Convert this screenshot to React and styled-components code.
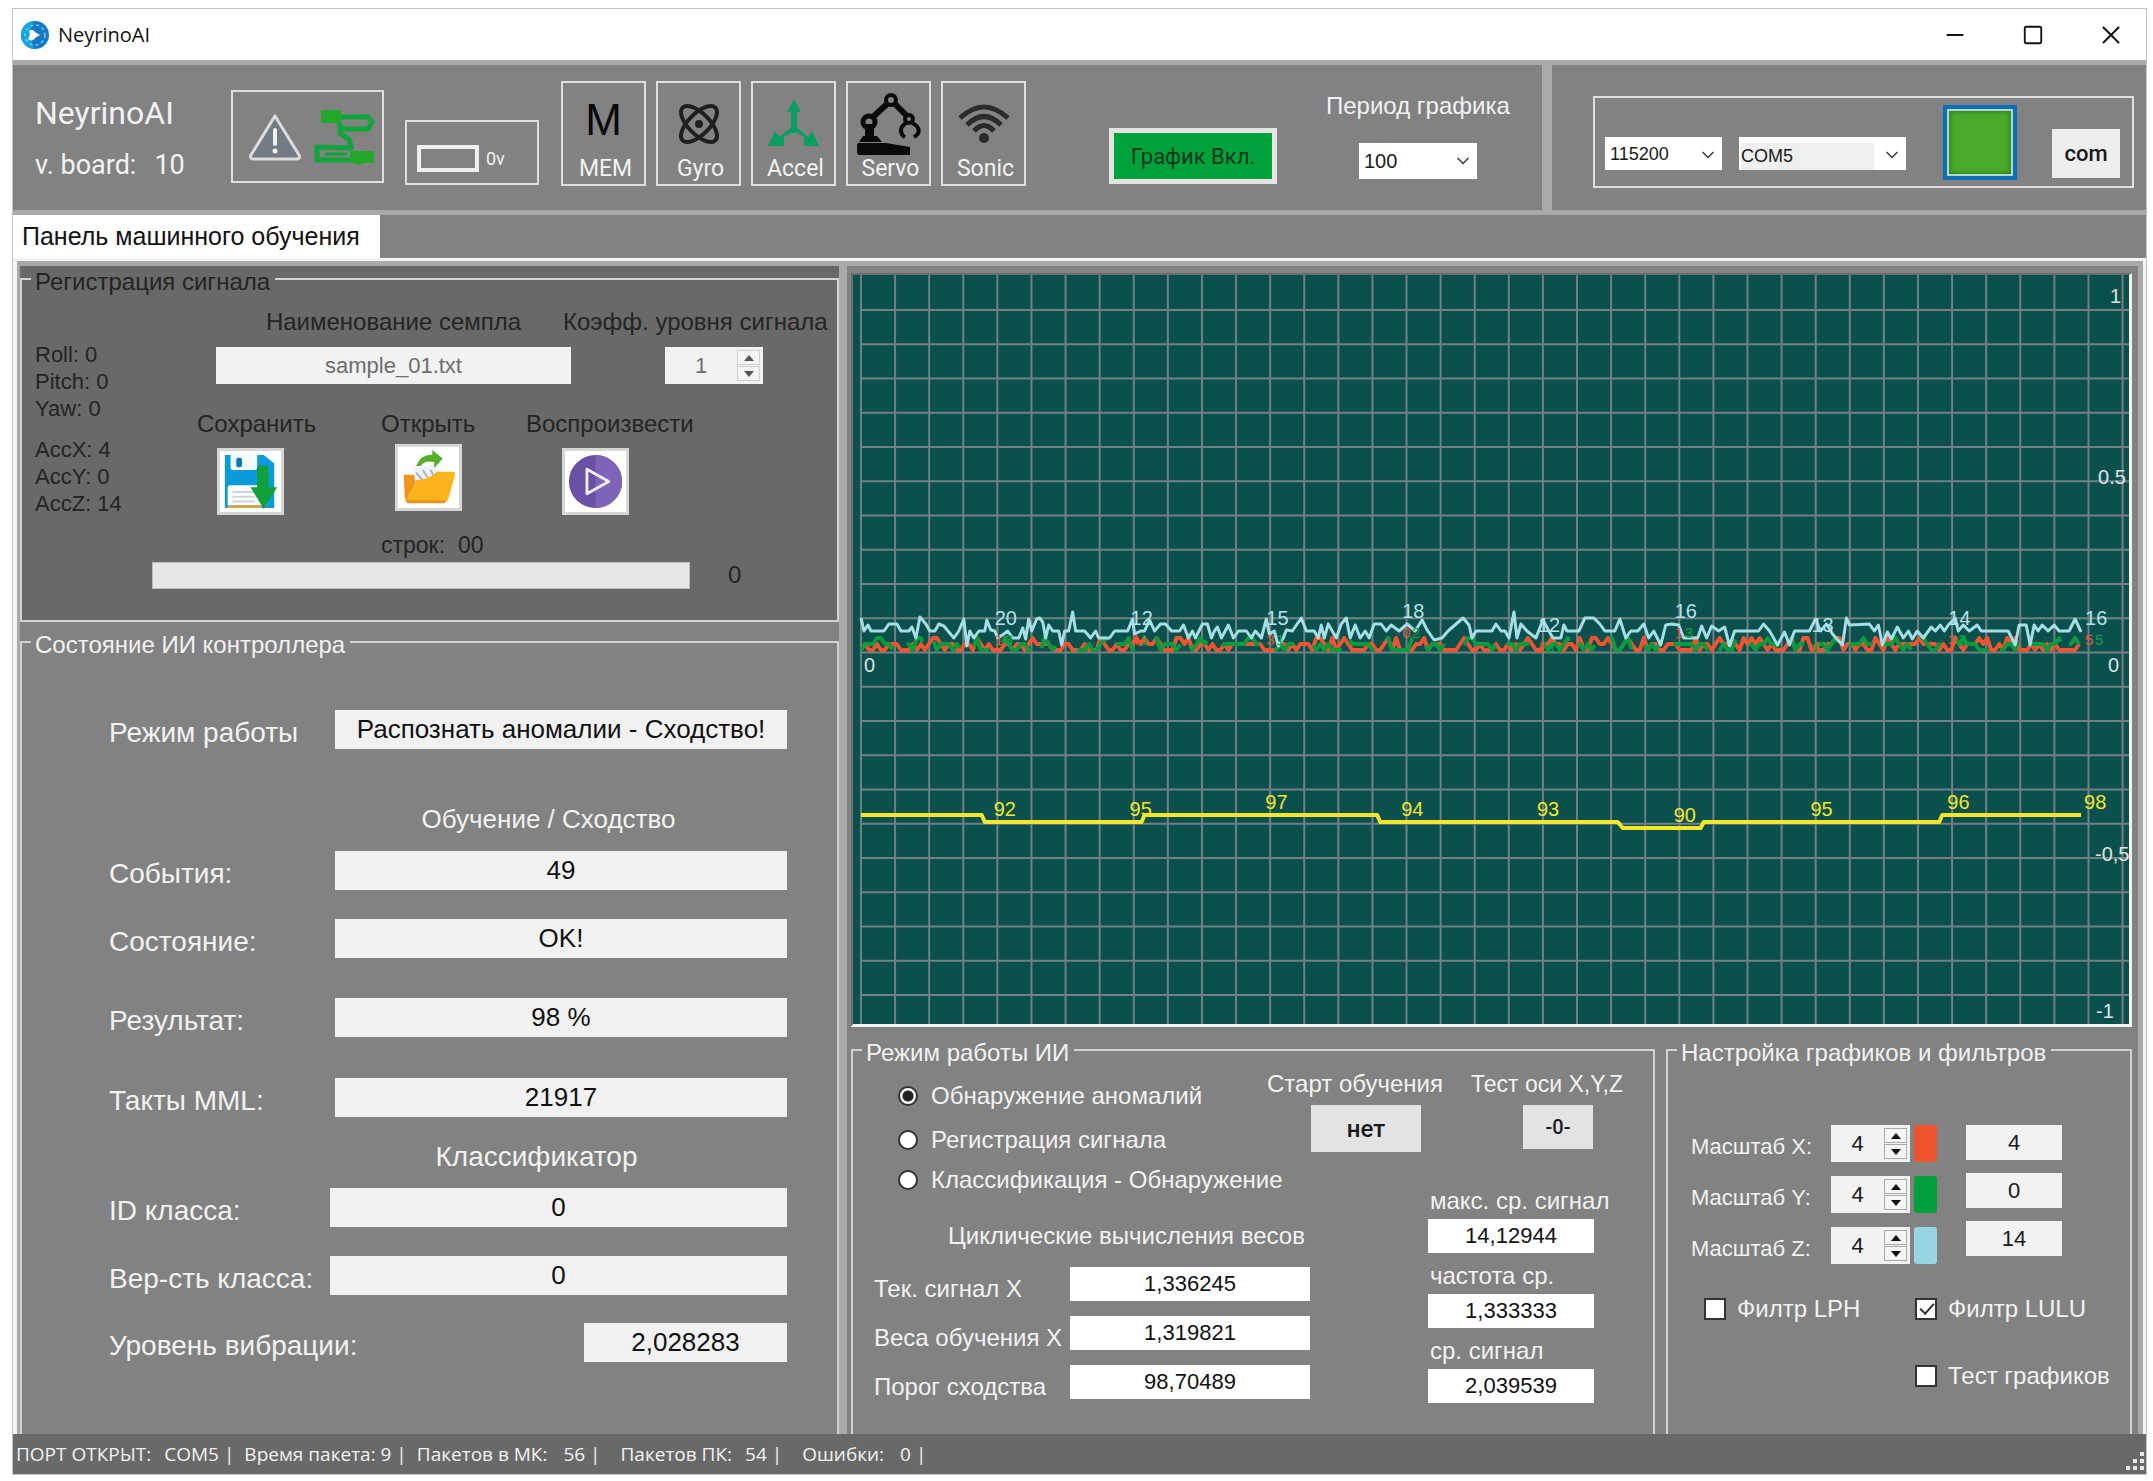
import styled, { createGlobalStyle } from "styled-components"
import { Atom, ChevronDown, Minus, Square, X } from "lucide-react"

const axes = [
    { name: "X", scale: 4, color: "#f0532f", value: 4 },
    { name: "Y", scale: 4, color: "#00a03c", value: 0 },
    { name: "Z", scale: 4, color: "#97d6e0", value: 14 },
]

export default function App() {
    return (
        <>
            <GlobalStyle />
            <Window>
                <TitleBar />
                <Toolbar />
                <Tabs>
                    <Tab type="button">Панель машинного обучения</Tab>
                </Tabs>
                <Body>
                    <LeftColumn>
                        <SignalPanel />
                        <StatePanel />
                    </LeftColumn>
                    <RightColumn>
                        <ChartFrame>
                            <Chart />
                        </ChartFrame>
                        <Settings>
                            <ModePanel />
                            <FilterPanel />
                        </Settings>
                    </RightColumn>
                </Body>
                <StatusBar>
                    <span>ПОРТ ОТКРЫТ:</span>
                    <StatusValue $gap={13}>COM5 |</StatusValue>
                    <StatusValue $gap={10}>Время пакета: 9 |</StatusValue>
                    <StatusValue $gap={10}>Пакетов в МК:</StatusValue>
                    <StatusValue $gap={16}>56 |</StatusValue>
                    <StatusValue $gap={20}>Пакетов ПК:</StatusValue>
                    <StatusValue $gap={13}>54 |</StatusValue>
                    <StatusValue $gap={20}>Ошибки:</StatusValue>
                    <StatusValue $gap={16}>0 |</StatusValue>
                    <GripIcon />
                </StatusBar>
            </Window>
        </>
    )
}

function TitleBar() {
    return (
        <TitleContainer>
            <LogoIcon />
            <h1>NeyrinoAI</h1>
            <WindowButton type="button" aria-label="Свернуть"><Minus size={26} strokeWidth={2} /></WindowButton>
            <WindowButton type="button" aria-label="Развернуть"><Square size={22} strokeWidth={2} /></WindowButton>
            <WindowButton type="button" aria-label="Закрыть"><X size={30} strokeWidth={1.6} /></WindowButton>
        </TitleContainer>
    )
}

function Toolbar() {
    return (
        <ToolbarContainer>
            <ToolbarMain>
                <Board>
                    <h2>NeyrinoAI</h2>
                    <p><span>v. board:</span><span>10</span></p>
                </Board>
                <LinkBox>
                    <WarningIcon />
                    <CableIcon />
                </LinkBox>
                <BatteryBox>
                    <Battery />
                    0v
                </BatteryBox>
                <Sensors>
                    <SensorButton type="button"><BigLetter>M</BigLetter><span>MEM</span></SensorButton>
                    <SensorButton type="button"><Atom size={48} color="#1f1f1f" strokeWidth={2} /><span>Gyro</span></SensorButton>
                    <SensorButton type="button"><AccelIcon /><span>Accel</span></SensorButton>
                    <SensorButton type="button"><ServoIcon /><span>Servo</span></SensorButton>
                    <SensorButton type="button"><SonicIcon /><span>Sonic</span></SensorButton>
                </Sensors>
                <GraphButton type="button">График Вкл.</GraphButton>
                <Period>
                    <label htmlFor="period">Период графика</label>
                    <Select id="period" value="100" width={118} height={36} size={20} />
                </Period>
            </ToolbarMain>
            <PortArea>
                <PortBox>
                    <Select label="Скорость" value="115200" width={117} height={33} size={18} />
                    <Select label="Порт" value="COM5" width={167} height={33} size={18} shaded />
                    <PortLamp type="button" aria-label="Порт открыт" />
                    <ComButton type="button">com</ComButton>
                </PortBox>
            </PortArea>
        </ToolbarContainer>
    )
}

function Select({ id, label, value, width, height, size, shaded }) {
    return (
        <SelectBox $width={width} $height={height} $size={size} $shaded={shaded}>
            <select id={id} aria-label={label} defaultValue={value}>
                <option>{value}</option>
            </select>
            <ChevronDown size={20} color="#444" strokeWidth={2} />
        </SelectBox>
    )
}

function Spinner({ id, value, label, width, muted }) {
    return (
        <SpinnerBox $width={width} $muted={muted}>
            <input id={id} defaultValue={value} inputMode="numeric" aria-label={label} />
            <div>
                <button type="button" aria-label="Больше"><svg viewBox="0 0 10 6"><path d="M5 0 10 6H0z" /></svg></button>
                <button type="button" aria-label="Меньше"><svg viewBox="0 0 10 6"><path d="M0 0h10L5 6z" /></svg></button>
            </div>
        </SpinnerBox>
    )
}

function SignalPanel() {
    return (
        <SignalGroup>
            <legend>Регистрация сигнала</legend>
            <SignalContent>
                <Readings>
                    <p>Roll: 0</p>
                    <p>Pitch: 0</p>
                    <p>Yaw: 0</p>
                    <p>AccX: 4</p>
                    <p>AccY: 0</p>
                    <p>AccZ: 14</p>
                </Readings>
                <SignalMain>
                    <SampleRow>
                        <SampleField>
                            <label htmlFor="sample">Наименование семпла</label>
                            <SampleInput id="sample" defaultValue="sample_01.txt" />
                        </SampleField>
                        <LevelField>
                            <label htmlFor="level">Коэфф. уровня сигнала</label>
                            <Spinner id="level" value="1" width={98} muted />
                        </LevelField>
                    </SampleRow>
                    <FileActions>
                        <FileAction $gap={10} $indent={20}>
                            <label htmlFor="save">Сохранить</label>
                            <FileButton id="save" type="button"><SaveIcon /></FileButton>
                        </FileAction>
                        <FileAction $gap={6} $indent={14}>
                            <label htmlFor="open">Открыть</label>
                            <FileButton id="open" type="button"><OpenIcon /></FileButton>
                        </FileAction>
                        <FileAction $gap={10} $indent={36}>
                            <label htmlFor="play">Воспроизвести</label>
                            <FileButton id="play" type="button"><PlayIcon /></FileButton>
                        </FileAction>
                    </FileActions>
                    <Lines htmlFor="lines"><span>строк:</span><span>00</span></Lines>
                    <ProgressRow>
                        <Progress id="lines" value="0" max="100" />
                        <span>0</span>
                    </ProgressRow>
                </SignalMain>
            </SignalContent>
        </SignalGroup>
    )
}

function StateField({ id, label, value, gap, labelWidth = 226 }) {
    return (
        <StateRow $gap={gap} $labelWidth={labelWidth}>
            <label htmlFor={id}>{label}</label>
            <input id={id} value={value} readOnly />
        </StateRow>
    )
}

function StatePanel() {
    return (
        <StateGroup>
            <legend>Состояние ИИ контроллера</legend>
            <StateContent>
                <StateField id="mode" label="Режим работы" value="Распознать аномалии - Сходство!" gap={55} />
                <StateHeading $gap={54} $size={26} $right={24}>Обучение / Сходство</StateHeading>
                <StateField id="events" label="События:" value="49" gap={16} />
                <StateField id="state" label="Состояние:" value="OK!" gap={29} />
                <StateField id="result" label="Результат:" value="98 %" gap={40} />
                <StateField id="ticks" label="Такты MML:" value="21917" gap={41} />
                <StateHeading $gap={24} $size={28} $right={48}>Классификатор</StateHeading>
                <StateField id="classId" label="ID класса:" value="0" gap={15} labelWidth={221} />
                <StateField id="classProb" label="Вер-сть класса:" value="0" gap={29} labelWidth={221} />
                <StateField id="vibration" label="Уровень вибрации:" value="2,028283" gap={28} labelWidth={475} />
            </StateContent>
        </StateGroup>
    )
}

function ModePanel() {
    return (
        <Group>
            <legend>Режим работы ИИ</legend>
            <ModeTop>
                <Radios>
                    <label><input type="radio" name="aiMode" defaultChecked />Обнаружение аномалий</label>
                    <label><input type="radio" name="aiMode" />Регистрация сигнала</label>
                    <label><input type="radio" name="aiMode" />Классификация - Обнаружение</label>
                </Radios>
                <ModeAction $width={204} $indent={44} $size={24}>
                    <label htmlFor="start">Старт обучения</label>
                    <StartButton id="start" type="button">нет</StartButton>
                </ModeAction>
                <ModeAction $width={154} $indent={52} $size={23}>
                    <label htmlFor="axisTest">Тест оси X,Y,Z</label>
                    <AxisButton id="axisTest" type="button">-0-</AxisButton>
                </ModeAction>
            </ModeTop>
            <ModeBottom>
                <Weights>
                    <h3>Циклические вычисления весов</h3>
                    <WeightRow>
                        <label htmlFor="current">Тек. сигнал X</label>
                        <WhiteInput id="current" defaultValue="1,336245" />
                    </WeightRow>
                    <WeightRow>
                        <label htmlFor="weights">Веса обучения X</label>
                        <WhiteInput id="weights" defaultValue="1,319821" />
                    </WeightRow>
                    <WeightRow>
                        <label htmlFor="threshold">Порог сходства</label>
                        <WhiteInput id="threshold" defaultValue="98,70489" />
                    </WeightRow>
                </Weights>
                <Averages>
                    <label htmlFor="maxAvg">макс. ср. сигнал</label>
                    <WhiteInput id="maxAvg" defaultValue="14,12944" />
                    <label htmlFor="freqAvg">частота ср.</label>
                    <WhiteInput id="freqAvg" defaultValue="1,333333" />
                    <label htmlFor="signalAvg">ср. сигнал</label>
                    <WhiteInput id="signalAvg" defaultValue="2,039539" />
                </Averages>
            </ModeBottom>
        </Group>
    )
}

function FilterPanel() {
    return (
        <Group>
            <legend>Настройка графиков и фильтров</legend>
            <Scales>
                <ScaleRows>
                    {axes.map(axis => (
                        <ScaleRow key={axis.name}>
                            <label htmlFor={"scale" + axis.name}>Масштаб {axis.name}:</label>
                            <Spinner id={"scale" + axis.name} value={axis.scale} width={79} />
                            <Swatch $color={axis.color} />
                        </ScaleRow>
                    ))}
                </ScaleRows>
                <ScaleValues>
                    {axes.map(axis => (
                        <input key={axis.name} value={axis.value} aria-label={"Значение " + axis.name} readOnly />
                    ))}
                </ScaleValues>
            </Scales>
            <Checks>
                <label><input type="checkbox" /><span>Филтр LPH</span></label>
                <label><input type="checkbox" defaultChecked /><span>Филтр LULU</span></label>
                <label><input type="checkbox" /><span>Тест графиков</span></label>
            </Checks>
        </Group>
    )
}

// chart geometry, in viewBox units
const GRID_X = 34.15
const GRID_Y = 34.25
const LEFT = 8
const ZERO = 377

const columns = Array.from({ length: 38 }, (_, i) => LEFT + i * GRID_X)
const rows = Array.from({ length: 21 }, (_, i) => 35 + i * GRID_Y)

// acceleration Z: x, height above zero
const accZ = [
    8, 34, 11, 21, 15, 27, 18, 21, 31, 21, 36, 28, 44, 28, 48, 21, 56, 21, 59, 25, 63, 14, 67, 35, 73, 28, 77, 21, 82, 21,
    86, 28, 91, 26, 101, 14, 106, 21, 111, 33, 114, 6, 117, 21, 121, 14, 126, 21, 132, 21, 134, 32, 138, 22, 142, 21,
    145, 14, 151, 18, 155, 21, 160, 14, 166, 14, 170, 24, 173, 13, 176, 33, 179, 21, 184, 33, 187, 34, 190, 30, 193, 14,
    196, 27, 200, 21, 206, 21, 209, 7, 212, 21, 216, 21, 220, 40, 223, 21, 232, 21, 238, 14, 243, 21, 246, 14, 257, 14,
    262, 21, 269, 21, 275, 21, 280, 33, 282, 18, 288, 21, 292, 21, 297, 32, 302, 21, 308, 28, 313, 28, 319, 21, 327, 21,
    331, 27, 336, 14, 340, 21, 343, 14, 350, 28, 355, 28, 359, 14, 362, 21, 365, 25, 369, 14, 376, 27, 381, 14, 386, 21,
    394, 21, 399, 14, 403, 21, 409, 14, 414, 33, 417, 18, 422, 21, 426, 6, 431, 14, 434, 22, 440, 21, 449, 34, 454, 21,
    462, 21, 466, 14, 469, 27, 472, 14, 476, 28, 480, 21, 484, 14, 489, 28, 494, 34, 498, 14, 503, 27, 508, 14, 513, 21,
    517, 14, 522, 28, 529, 28, 534, 21, 539, 27, 547, 21, 555, 28, 563, 21, 570, 32, 575, 22, 582, 12, 590, 14, 596, 21,
    604, 28, 611, 34, 617, 27, 620, 14, 624, 21, 640, 21, 644, 28, 649, 21, 653, 21, 657, 14, 662, 40, 665, 14, 669, 28,
    675, 21, 684, 14, 691, 32, 697, 21, 701, 14, 709, 14, 712, 27, 715, 21, 727, 21, 733, 34, 742, 34, 748, 28, 753, 21,
    763, 21, 768, 33, 774, 14, 779, 21, 786, 21, 792, 28, 797, 14, 802, 21, 809, 7, 814, 27, 820, 28, 827, 27, 832, 14,
    846, 14, 850, 26, 855, 14, 860, 26, 867, 21, 873, 25, 878, 6, 883, 21, 907, 21, 912, 28, 918, 21, 926, 7, 933, 20,
    938, 7, 943, 21, 958, 21, 964, 33, 969, 21, 975, 28, 981, 18, 991, 7, 995, 34, 998, 27, 1018, 28, 1023, 21, 1027, 27,
    1031, 7, 1036, 20, 1040, 13, 1046, 25, 1052, 14, 1057, 21, 1061, 13, 1066, 21, 1072, 14, 1080, 25, 1084, 21, 1089, 27,
    1093, 21, 1097, 27, 1104, 34, 1107, 21, 1112, 27, 1118, 21, 1126, 27, 1130, 21, 1157, 21, 1164, 7, 1168, 27, 1175, 27,
    1179, 7, 1183, 27, 1187, 21, 1191, 27, 1197, 21, 1203, 27, 1208, 21, 1218, 21, 1224, 33, 1230, 20,
]

const accZPoints = accZ.reduce((out, n, i) => out + (i % 2 ? `,${ZERO - n} ` : n), "")

// low level noise of the X and Y axes, stepped in units of one count
function noise(seed, chance) {
    let state = seed
    const points = []
    for (let x = LEFT; x <= 1230; x += 4) {
        state = (state * 16807) % 2147483647
        const r = state / 2147483647
        const level = r < chance ? 0 : r < 0.86 ? 1 : 2
        points.push(`${x},${ZERO - 2 - level * 6}`)
    }
    return points.join(" ")
}

const accXPoints = noise(4217, 0.45)
const accYPoints = noise(991, 0.35)

const peaks = [
    { x: 142, z: "20", zy: 350, p: "92", py: 541, a: "1", b: "3" },
    { x: 278, z: "12", zy: 350, p: "95", py: 541, a: "4", b: "1" },
    { x: 414, z: "15", zy: 350, p: "97", py: 534, a: "3", b: "1" },
    { x: 550, z: "18", zy: 343, p: "94", py: 541, a: "0", b: "2" },
    { x: 686, z: "12", zy: 357, p: "93", py: 541, a: "1", b: "1" },
    { x: 823, z: "16", zy: 343, p: "90", py: 547, a: "1", b: "3" },
    { x: 960, z: "13", zy: 357, p: "95", py: 541, a: "4", b: "1" },
    { x: 1097, z: "14", zy: 350, p: "96", py: 534, a: "3", b: "3" },
    { x: 1234, z: "16", zy: 350, p: "98", py: 534, a: "5", b: "5" },
]

function Chart() {
    return (
        <ChartSvg viewBox="0 0 1278 749" preserveAspectRatio="none" role="img">
            <g stroke="#737f82" strokeWidth="2">
                {columns.map(x => <line key={x} x1={x} x2={x} y1="0" y2="749" />)}
                {rows.map(y => <line key={y} x1={LEFT} x2="1278" y1={y} y2={y} />)}
            </g>
            <g fill="none" strokeLinejoin="round">
                <polyline points={accXPoints} stroke="#f0532f" strokeWidth="4" />
                <polyline points={accYPoints} stroke="#0a9b3f" strokeWidth="4" strokeDasharray="44 18 30 26" />
                <polyline points={accZPoints} stroke="#a6dde6" strokeWidth="3" />
                <polyline
                    points="8,540 129,540 132,547 289,547 292,540 525,540 528,547 766,547 771,553 849,553 852,547 1088,547 1091,540 1230,540"
                    stroke="#f4e62a"
                    strokeWidth="4"
                />
            </g>
            {peaks.map(peak => (
                <g key={peak.x}>
                    <text x={peak.x} y={peak.zy} fill="#b4e2ee">{peak.z}</text>
                    <text x={peak.x} y={peak.zy + 20} fontSize="15" fill="#f0532f">{peak.a}</text>
                    <text x={peak.x + 10} y={peak.zy + 20} fontSize="15" fill="#0fa544">{peak.b}</text>
                    <text x={peak.x - 1} y={peak.py} fill="#f4e62a">{peak.p}</text>
                </g>
            ))}
            <g fill="#dfe3e3">
                <text x="11" y="397">0</text>
                <text x="1259" y="28">1</text>
                <text x="1247" y="209">0.5</text>
                <text x="1257" y="397">0</text>
                <text x="1244" y="586">-0,5</text>
                <text x="1245" y="743">-1</text>
            </g>
        </ChartSvg>
    )
}

function LogoIcon() {
    return (
        <svg width="28" height="28" viewBox="0 0 28 28">
            <circle cx="14" cy="14" r="14" fill="#1479c4" />
            <path d="M14 0A14 14 0 0 0 14 28C9 24 8 5 14 0z" fill="#14a5e0" />
            <circle cx="14" cy="14" r="10" fill="none" stroke="#7cc6ef" strokeWidth="1.5" strokeDasharray="3 3" />
            <path d="M8 10c3-2 5-1 6 1l5 3-5 3c-1 3-5 3-7 1l2-4z" fill="#fff" />
        </svg>
    )
}

function WarningIcon() {
    return (
        <svg width="54" height="48" viewBox="0 0 54 48">
            <path d="M27 3 51 42a2.500 2.500 0 0 1-2 4H5a2.500 2.500 0 0 1-2-4z" fill="#737b86" stroke="#dcdcdc" strokeWidth="3" strokeLinejoin="round" />
            <path d="M27 17v14" stroke="#f2f2f2" strokeWidth="4" strokeLinecap="round" />
            <circle cx="27" cy="38" r="2.500" fill="#f2f2f2" />
        </svg>
    )
}

function CableIcon() {
    return (
        <svg width="62" height="56" viewBox="0 0 62 56" fill="none" stroke="#0fa53a">
            <path d="M24 8h31l4 5-4 7H28z" strokeWidth="5" />
            <path d="M29 20c-8 6 8 7 8 13 0 3 1 5 2 7" strokeWidth="5" />
            <path d="M40 39 4 38v13h36" strokeWidth="5" />
            <path d="M12 45h22" strokeWidth="3" />
            <rect x="8" y="1" width="20" height="13" fill="#24a82c" stroke="none" />
            <path d="M37 42h24v12H50l-4 2-9-3z" fill="#24a82c" stroke="none" />
        </svg>
    )
}

function AccelIcon() {
    return (
        <svg width="52" height="50" viewBox="0 0 52 50" fill="#0b9e63">
            <path d="M26 0l7 13h-4v20h-6V13h-4z" />
            <path d="M20 31l6-4 6 4 8 7 4-6 7 15H36v-9l-7-4h-6l-7 4v9H0l7-15 4 6z" />
        </svg>
    )
}

function ServoIcon() {
    return (
        <svg width="66" height="64" viewBox="0 0 66 64" fill="none" stroke="#0a0a0a">
            <path d="M2 51h28l24 4v8H4q-3 0-3-3v-7z" fill="#0a0a0a" stroke="none" />
            <path d="M7 44h14l5 6H3zM9 32h9v12H9z" fill="#0a0a0a" stroke="none" />
            <circle cx="13" cy="30" r="6" strokeWidth="5" />
            <circle cx="35" cy="8" r="5" strokeWidth="4" />
            <circle cx="53" cy="27" r="4" strokeWidth="4" />
            <path d="M18 24 31 12M39 12l11 11" strokeWidth="6" />
            <path d="M50 31c-8 5-5 12-1 14M56 31c9 4 8 11 2 14" strokeWidth="4" />
        </svg>
    )
}

function SonicIcon() {
    return (
        <svg width="52" height="40" viewBox="0 0 52 40" fill="none" stroke="#2b2b2b" strokeWidth="5">
            <path d="M2 14Q26-8 50 14" />
            <path d="M9 21Q26 4 43 21" />
            <path d="M16 27Q26 16 36 27" />
            <ellipse cx="26" cy="34" rx="5" ry="5" fill="#2b2b2b" stroke="none" />
        </svg>
    )
}

function SaveIcon() {
    return (
        <svg viewBox="0 0 60 60">
            <path d="M3 2h41l11 9v47H3z" fill="#0b9bdc" />
            <path d="M9 2h28v13q0 3-3 3H12q-3 0-3-3z" fill="#f4fbff" />
            <rect x="15" y="5" width="6" height="10" rx="2" fill="#0878b8" />
            <path d="M6 37q0-3 3-3h38v21H6z" fill="#fff" />
            <path d="M11 41h24M11 46h24M11 51h24" stroke="#c9d4dc" strokeWidth="2" />
            <path d="M6 55h36v3H6z" fill="#d8a646" />
            <path d="M37 16q0-3 6-3t6 3v20h9L44 59 30 36h7z" fill="#12a03a" />
        </svg>
    )
}

function OpenIcon() {
    return (
        <svg viewBox="0 0 60 60">
            <path d="M4 27h12l3 3v24H8q-3 0-3-4z" fill="#f0931d" />
            <path d="M14 20l24-4 7 20-28 8z" fill="#eef2f7" />
            <path d="M17 25l7 8M24 22l5 8M32 22l4 7" stroke="#a5b4c8" strokeWidth="2" />
            <path d="M17 33q14-1 22-9h17q2 0 2 3l-7 25q-1 3-4 3H6z" fill="#fbb41c" />
            <path d="M5 54h44l-2 3H8z" fill="#e8921b" />
            <path d="M17 18Q22 5 34 6V1l11 9-9 10v-6q-10-3-14 4z" fill="#58ad2a" />
        </svg>
    )
}

function PlayIcon() {
    return (
        <svg viewBox="0 0 60 60">
            <circle cx="30" cy="30" r="28" fill="#6b51a5" />
            <path d="M30 2a28 28 0 0 1 0 56z" fill="#7f63b8" />
            <path d="M21 17v26l23-13z" fill="none" stroke="#f3effa" strokeWidth="3" strokeLinejoin="round" />
        </svg>
    )
}

function GripIcon() {
    return (
        <svg width="22" height="22" viewBox="0 0 22 22" fill="#e6e6e6">
            <path d="M17 1h4v4h-4zM10 8h4v4h-4zM17 8h4v4h-4zM3 15h4v4H3zM10 15h4v4h-4zM17 15h4v4h-4z" />
        </svg>
    )
}

const GlobalStyle = createGlobalStyle`
    * {
        box-sizing: border-box;
        margin: 0;
        padding: 0;
    }
    body {
        background-color: #fff;
        font-family: "Liberation Sans", Arial, sans-serif;
        font-size: 24px;
    }
    button, input, select {
        font-family: inherit;
        border: none;
        border-radius: 0;
    }
    label {
        white-space: nowrap;
    }
    fieldset {
        min-width: 0;
    }
`

const Window = styled.div`
    margin: 8px 6px 5px 12px;
    border: 1px solid #c3c3c3;
    background-color: #828282;
`

const TitleContainer = styled.header`
    height: 51px;
    display: flex;
    align-items: center;
    padding: 0 8px;
    background-color: #fff;
    h1{
        flex: 1;
        margin-left: 9px;
        font-family: "Open Sans", sans-serif;
        font-size: 20px;
        font-weight: 400;
        color: #111;
    }
`

const WindowButton = styled.button`
    width: 50px;
    height: 40px;
    margin-left: 28px;
    display: flex;
    align-items: center;
    justify-content: center;
    background: none;
    color: #111;
    &:last-child{
        margin-right: 2px;
    }
`

const ToolbarContainer = styled.div`
    height: 155px;
    display: flex;
    border-top: 5px solid #a9a9a9;
    border-bottom: 5px solid #a9a9a9;
    font-family: Roboto, sans-serif;
    color: #f2f2f2;
`

const ToolbarMain = styled.div`
    flex: 1;
    display: flex;
    align-items: flex-start;
    padding-left: 22px;
`

const Board = styled.div`
    width: 196px;
    padding-top: 28px;
    h2{
        font-size: 32px;
        line-height: 40px;
        font-weight: 400;
    }
    p{
        display: flex;
        gap: 18px;
        margin-top: 14px;
        font-size: 27px;
        line-height: 36px;
    }
`

const LinkBox = styled.div`
    width: 153px;
    height: 93px;
    margin-top: 25px;
    display: flex;
    align-items: center;
    justify-content: space-between;
    padding: 0 7px 0 15px;
    border: 2px solid #dedede;
`

const BatteryBox = styled.div`
    width: 134px;
    height: 65px;
    margin: 55px 0 0 21px;
    display: flex;
    align-items: center;
    gap: 7px;
    padding: 11px 0 0 10px;
    border: 2px solid #dedede;
    font-size: 18px;
`

const Battery = styled.div`
    width: 62px;
    height: 27px;
    border: 4px solid #efefef;
`

const Sensors = styled.div`
    display: flex;
    gap: 10px;
    margin: 16px 0 0 22px;
`

const SensorButton = styled.button`
    width: 85px;
    height: 105px;
    display: flex;
    flex-direction: column;
    align-items: center;
    justify-content: space-between;
    padding: 8px 0 2px;
    border: 2px solid #dedede;
    background: none;
    color: #f2f2f2;
    font-size: 23px;
    line-height: 26px;
    > :first-child{
        margin: auto;
    }
    > :last-child{
        padding-left: 4px;
    }
`

const BigLetter = styled.span`
    padding-bottom: 8px;
    font-family: "Liberation Sans", Arial, sans-serif;
    font-size: 44px;
    line-height: 44px;
    color: #0a0a0a;
`

const GraphButton = styled.button`
    width: 168px;
    height: 56px;
    margin: 63px 0 0 83px;
    border: 5px solid #e4e4e4;
    background-color: #00a33b;
    color: #07351a;
    font-size: 22px;
`

const Period = styled.div`
    display: flex;
    flex-direction: column;
    align-items: center;
    gap: 23px;
    margin: 27px 0 0 49px;
    font-family: "Liberation Sans", Arial, sans-serif;
    line-height: 28px;
`

const SelectBox = styled.div`
    position: relative;
    width: ${props => props.$width}px;
    height: ${props => props.$height}px;
    background-color: #fff;
    padding: ${props => props.$shaded ? "3px 32px 3px 2px" : "0"};
    select{
        width: 100%;
        height: 100%;
        appearance: none;
        padding-left: ${props => props.$shaded ? "0" : "5px"};
        background-color: ${props => props.$shaded ? "#efefef" : "#fff"};
        color: #1a1a1a;
        font-family: "Liberation Sans", Arial, sans-serif;
        font-size: ${props => props.$size}px;
    }
    svg{
        position: absolute;
        right: 4px;
        top: 8px;
        pointer-events: none;
    }
`

const PortArea = styled.div`
    width: 604px;
    padding: 31px 12px 0 41px;
    border-left: 10px solid #a9a9a9;
`

const PortLamp = styled.button`
    width: 74px;
    height: 75px;
    margin: 0 35px 0 37px;
    border: 4px solid #0b6fbb;
    background-color: #4bab2c;
    box-shadow: inset 0 0 0 2px #b9d8c4, inset 0 0 5px 3px #2c7d1c;
`

const PortBox = styled.div`
    height: 92px;
    display: flex;
    align-items: flex-start;
    padding: 7px 0 0 10px;
    border: 2px solid #dedede;
    > ${SelectBox}{
        margin-top: 32px;
    }
    > ${SelectBox} + ${SelectBox}{
        margin-left: 17px;
    }
`

const ComButton = styled.button`
    width: 68px;
    height: 49px;
    margin-top: 24px;
    background-color: #ededed;
    color: #1a1a1a;
    font-size: 22px;
    font-weight: 500;
`

const Tabs = styled.nav`
    height: 43px;
`

const Tab = styled.button`
    height: 43px;
    padding: 0 20px 0 9px;
    background-color: #fff;
    color: #111;
    font-size: 25px;
`

const Body = styled.main`
    display: grid;
    grid-template-columns: 819fr 1291fr;
    gap: 8px;
    padding: 5px 5px 0 3px;
    border: solid #f4f4f4;
    border-width: 3px 3px 0 4px;
    background-color: #a9a9a9;
`

const LeftColumn = styled.div`
    display: flex;
    flex-direction: column;
    background-color: #828282;
`

const RightColumn = styled.div`
    display: flex;
    flex-direction: column;
    padding: 7px 6px 0 4px;
    background-color: #828282;
`

const Group = styled.fieldset`
    border: 2px solid #d2d2d2;
    border-bottom: none;
    color: #f2f2f2;
    legend{
        margin-left: 9px;
        padding: 6px 5px 0 4px;
        line-height: 20px;
    }
`

const SignalGroup = styled(Group)`
    height: 356px;
    border-bottom: 2px solid #d2d2d2;
    background-color: #696969;
    box-shadow: 0 -13px 0 #696969;
    clip-path: inset(0);
    color: #242424;
`

const StateGroup = styled(Group)`
    flex: 1;
    margin-top: 7px;
`

const SignalContent = styled.div`
    display: flex;
`

const Readings = styled.div`
    width: 130px;
    padding: 49px 0 0 13px;
    font-size: 22px;
    line-height: 27px;
    p:nth-child(4){
        margin-top: 14px;
    }
`

const SignalMain = styled.div`
    flex: 1;
    line-height: 28px;
`

const SampleRow = styled.div`
    display: flex;
    padding: 16px 0 0 64px;
`

const SampleField = styled.div`
    width: 347px;
    display: flex;
    flex-direction: column;
    gap: 11px;
    label{
        padding-left: 8px;
        text-align: center;
    }
`

const SampleInput = styled.input`
    width: 355px;
    height: 37px;
    background-color: #f2f2f2;
    color: #6d6d6d;
    text-align: center;
    font-size: 22px;
`

const LevelField = styled.div`
    display: flex;
    flex-direction: column;
    gap: 11px;
    > div{
        margin-left: 102px;
    }
`

const SpinnerBox = styled.div`
    width: ${props => props.$width}px;
    height: 37px;
    display: flex;
    align-items: center;
    padding-right: 3px;
    background-color: #f2f2f2;
    input{
        flex: 1;
        width: 0;
        background: none;
        color: ${props => props.$muted ? "#6d6d6d" : "#1a1a1a"};
        text-align: center;
        font-size: 22px;
    }
    div{
        width: 23px;
        height: 31px;
        display: flex;
        flex-direction: column;
        gap: 1px;
    }
    button{
        flex: 1;
        display: flex;
        align-items: center;
        justify-content: center;
        border: 1px solid ${props => props.$muted ? "#d0d0d0" : "#a9a9a9"};
        background-color: #f4f4f4;
    }
    svg{
        width: 10px;
        height: 6px;
        fill: ${props => props.$muted ? "#555" : "#111"};
    }
`

const FileActions = styled.div`
    display: grid;
    grid-template-columns: 184px 145px 1fr;
    margin-top: 26px;
    padding-left: 45px;
`

const FileAction = styled.div`
    display: flex;
    flex-direction: column;
    gap: ${props => props.$gap}px;
    button{
        margin-left: ${props => props.$indent}px;
    }
`

const FileButton = styled.button`
    width: 67px;
    height: 67px;
    padding: 2px;
    border: 3px solid #d6d6d6;
    background-color: #fff;
    svg{
        display: block;
        width: 100%;
        height: 100%;
    }
`

const Lines = styled.label`
    display: flex;
    gap: 13px;
    margin-top: 16px;
    padding-left: 229px;
    font-size: 23px;
`

const ProgressRow = styled.div`
    display: flex;
    align-items: center;
    gap: 38px;
    margin-top: 2px;
`

const Progress = styled.progress`
    width: 538px;
    height: 27px;
    appearance: none;
    border: 1px solid #bcbcbc;
    background-color: #e6e6e6;
    &::-webkit-progress-bar{
        background-color: #e6e6e6;
    }
`

const StateContent = styled.div`
    padding: 0 50px 72px 87px;
`

const StateRow = styled.div`
    display: grid;
    grid-template-columns: ${props => props.$labelWidth}px 1fr;
    height: 39px;
    margin-top: ${props => props.$gap}px;
    label{
        padding-top: 8px;
        font-size: 28px;
        line-height: 30px;
    }
    input{
        width: 100%;
        background-color: #f1f1f1;
        color: #111;
        text-align: center;
        font-size: 26px;
    }
`

const StateHeading = styled.h3`
    margin: ${props => props.$gap}px 0 0 225px;
    padding-right: ${props => props.$right}px;
    text-align: center;
    font-size: ${props => props.$size}px;
    line-height: 32px;
    font-weight: 400;
`

const ChartFrame = styled.div`
    border: 2px solid #6f6b6d;
    border-right: 3px solid #f4f4f4;
    border-bottom: 3px solid #f4f4f4;
`

const ChartSvg = styled.svg`
    display: block;
    width: 100%;
    height: 749px;
    background-color: #0a504c;
    font-size: 20px;
`

const Settings = styled.div`
    flex: 1;
    display: grid;
    grid-template-columns: 804fr 466fr;
    gap: 11px;
    padding-top: 10px;
`

const ModeTop = styled.div`
    display: flex;
    line-height: 20px;
`

const Radios = styled.div`
    width: 414px;
    padding: 23px 0 0 45px;
    label{
        display: flex;
        align-items: center;
        gap: 13px;
        margin-bottom: 24px;
    }
    label:nth-child(2){
        margin-bottom: 20px;
    }
    label:last-child{
        margin-bottom: 0;
    }
    input{
        flex-shrink: 0;
        width: 20px;
        height: 20px;
        appearance: none;
        border: 2px solid #333;
        border-radius: 50%;
        background-color: #fff;
    }
    input:checked{
        background-image: radial-gradient(circle, #222 5px, #fff 6px);
    }
`

const ModeAction = styled.div`
    width: ${props => props.$width}px;
    display: flex;
    flex-direction: column;
    padding-top: 11px;
    gap: 11px;
    font-size: ${props => props.$size}px;
    button{
        margin-left: ${props => props.$indent}px;
    }
`

const StartButton = styled.button`
    width: 110px;
    height: 47px;
    background-color: #e3e3e3;
    color: #1a1a1a;
    font-family: Roboto, sans-serif;
    font-size: 24px;
    font-weight: 500;
`

const AxisButton = styled(StartButton)`
    width: 70px;
    height: 44px;
    font-size: 20px;
`

const ModeBottom = styled.div`
    display: flex;
    line-height: 20px;
`

const Weights = styled.div`
    padding: 36px 0 0 21px;
    h3{
        margin: 0 0 21px 74px;
        font-size: 24px;
        font-weight: 400;
    }
`

const WeightRow = styled.div`
    display: flex;
    margin-bottom: 15px;
    label{
        width: 196px;
        padding-top: 12px;
    }
    input{
        width: 240px;
    }
`

const WhiteInput = styled.input`
    width: 166px;
    height: 34px;
    background-color: #fff;
    color: #111;
    text-align: center;
    font-size: 22px;
`

const Averages = styled.div`
    display: flex;
    flex-direction: column;
    margin-left: 118px;
    padding-top: 1px;
    label{
        padding-left: 2px;
        margin-bottom: 8px;
    }
    input{
        margin-bottom: 13px;
    }
`

const Scales = styled.div`
    display: flex;
    padding: 62px 0 0 23px;
`

const ScaleRows = styled.div`
    display: flex;
    flex-direction: column;
    gap: 14px;
`

const ScaleRow = styled.div`
    display: flex;
    label{
        width: 140px;
        padding-top: 6px;
        font-size: 22px;
        line-height: 31px;
    }
`

const Swatch = styled.div`
    width: 23px;
    height: 37px;
    margin-left: 4px;
    border-radius: 3px;
    background-color: ${props => props.$color};
`

const ScaleValues = styled.div`
    display: flex;
    flex-direction: column;
    gap: 13px;
    margin-left: 29px;
    input{
        width: 96px;
        height: 35px;
        background-color: #f2f2f2;
        color: #1a1a1a;
        text-align: center;
        font-size: 22px;
    }
`

const Checks = styled.div`
    display: grid;
    grid-template-columns: 211px 1fr;
    row-gap: 45px;
    padding: 34px 0 0 36px;
    line-height: 22px;
    label{
        display: flex;
        gap: 11px;
    }
    label:last-child{
        grid-column: 2;
    }
    input{
        width: 22px;
        height: 22px;
        appearance: none;
        border: 2px solid #333;
        background-color: #fff;
    }
    input:checked::after{
        content: "";
        display: block;
        width: 6px;
        height: 12px;
        margin: 0 0 0 6px;
        border: solid #333;
        border-width: 0 2px 2px 0;
        transform: rotate(42deg);
    }
`

const StatusBar = styled.footer`
    height: 40px;
    display: flex;
    align-items: center;
    padding: 0 1px 0 3px;
    background-color: #696969;
    color: #f2f2f2;
    font-family: "Open Sans", sans-serif;
    font-size: 19px;
    svg{
        margin: auto 0 1px auto;
    }
`

const StatusValue = styled.span`
    margin-left: ${props => props.$gap}px;
`
